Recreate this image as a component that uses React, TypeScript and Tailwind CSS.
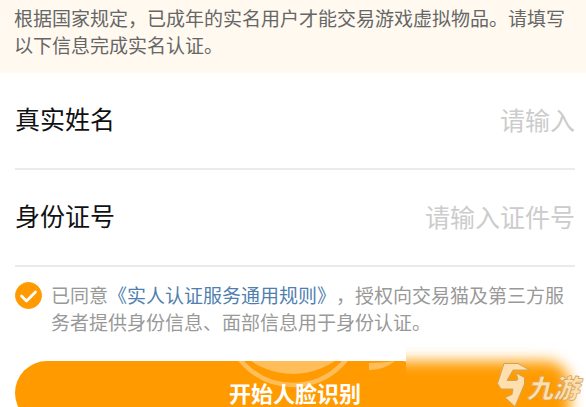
import { useState } from 'react';

interface FieldProps {
    id: string;
    label: string;
    placeholder: string;
}

const Field = ({ id, label, placeholder }: FieldProps) => (
    <div className="flex h-[97px] items-center border-b-2 border-[#ebebeb] pb-[6px]">
        <label htmlFor={id} className="shrink-0 text-[25px] leading-8 text-[#111111]">
            {label}
        </label>
        <input
            id={id}
            type="text"
            placeholder={placeholder}
            className="min-w-0 flex-1 pt-0.5 text-right text-[25px] leading-8 text-[#111111] outline-none placeholder:text-[#cccccc]"
        />
    </div>
);

const RingMark = () => (
    <svg
        viewBox="0 0 200 46"
        className="pointer-events-none absolute top-0 left-1/2 h-[46px] w-[200px] -translate-x-[74px]"
        fill="#fff"
        fillOpacity="0.35"
        aria-hidden="true"
    >
        <circle cx="72" cy="-44" r="68" fill="none" stroke="#fff" strokeOpacity="0.35" strokeWidth="4.5" />
        <circle cx="72" cy="-61" r="74" />
        <path d="M148 2c10 0 18-1 26-2-6 5-15 9-26 9z" />
        <path d="M179 0h12v4q-6-5-12-4z" fillOpacity="0.9" />
    </svg>
);

const BrandMark = () => (
    <div className="absolute right-0 bottom-0 h-[60px] w-[180px] overflow-hidden bg-white">
        <div className="absolute top-[14px] right-[16px] -bottom-6 -left-6 rounded-tr-[24px] bg-[#ff9b00] blur-[7px]" />
        <svg
            viewBox="0 0 180 60"
            className="absolute inset-0 h-full w-full"
            fill="#ffdfae"
            stroke="#d0a35c"
            strokeWidth="1"
            strokeLinejoin="round"
            aria-hidden="true"
        >
            <path d="M98 16.500h14l11.500 6.500H107l-6 10.500h9l2-1-2-6.500 8.500 4.500v6.500l-9.500 22.500-10-9 7-3 1-5.500H95l-3.500-5.500z" />
            <text
                x="121"
                y="51"
                fontSize="26"
                fontWeight="900"
                fontStyle="italic"
                strokeWidth="0.7"
                fontFamily="'Noto Sans CJK SC', sans-serif"
            >
                九游
            </text>
        </svg>
    </div>
);

const App = () => {
    const [agreed, setAgreed] = useState(true);

    return (
        <main className="relative h-screen overflow-hidden bg-white font-['Noto_Sans_CJK_SC',sans-serif] [text-spacing-trim:space-all]">
            <p className="bg-[#fff9f0] px-[14px] pt-1 pb-[15px] text-[19px] leading-[27px] text-[#666666]">
                根据国家规定，已成年的实名用户才能交易游戏虚拟物品。请填写以下信息完成实名认证。
            </p>
            <form className="pr-[11px] pl-[15px]" onSubmit={(event) => event.preventDefault()}>
                <Field id="name" label="真实姓名" placeholder="请输入" />
                <Field id="idNumber" label="身份证号" placeholder="请输入证件号" />

                <div className="flex gap-[9px] pt-[14px] pb-[26px]">
                    <div className="relative mt-px h-[27px] w-[27px] shrink-0">
                        <input
                            id="agree"
                            type="checkbox"
                            checked={agreed}
                            onChange={(event) => setAgreed(event.target.checked)}
                            className="block h-full w-full appearance-none rounded-full border border-gray-300 checked:border-[#ff9b00] checked:bg-[#ff9b00]"
                        />
                        {agreed && (
                            <svg
                                viewBox="0 0 27 27"
                                className="pointer-events-none absolute inset-0 h-full w-full"
                                fill="none"
                                stroke="#fff"
                                strokeWidth="2.8"
                                strokeLinecap="round"
                                strokeLinejoin="round"
                            >
                                <path d="M6.500 14l5 5 9-9" />
                            </svg>
                        )}
                    </div>
                    <label htmlFor="agree" className="text-[19px] leading-[27px] text-[#999999]">
                        已同意
                        <a href="#rules" className="text-[#4f7fae]">
                            《实人认证服务通用规则》
                        </a>
                        ，授权向交易猫及第三方服务者提供身份信息、面部信息用于身份认证。
                    </label>
                </div>

                <button
                    type="submit"
                    className="relative h-16 w-full overflow-hidden rounded-full bg-[#ff9b00] pb-0.5 text-[22px] font-bold text-white"
                >
                    <RingMark />
                    <span className="relative">开始人脸识别</span>
                </button>
            </form>
            <BrandMark />
        </main>
    );
};

export default App;
